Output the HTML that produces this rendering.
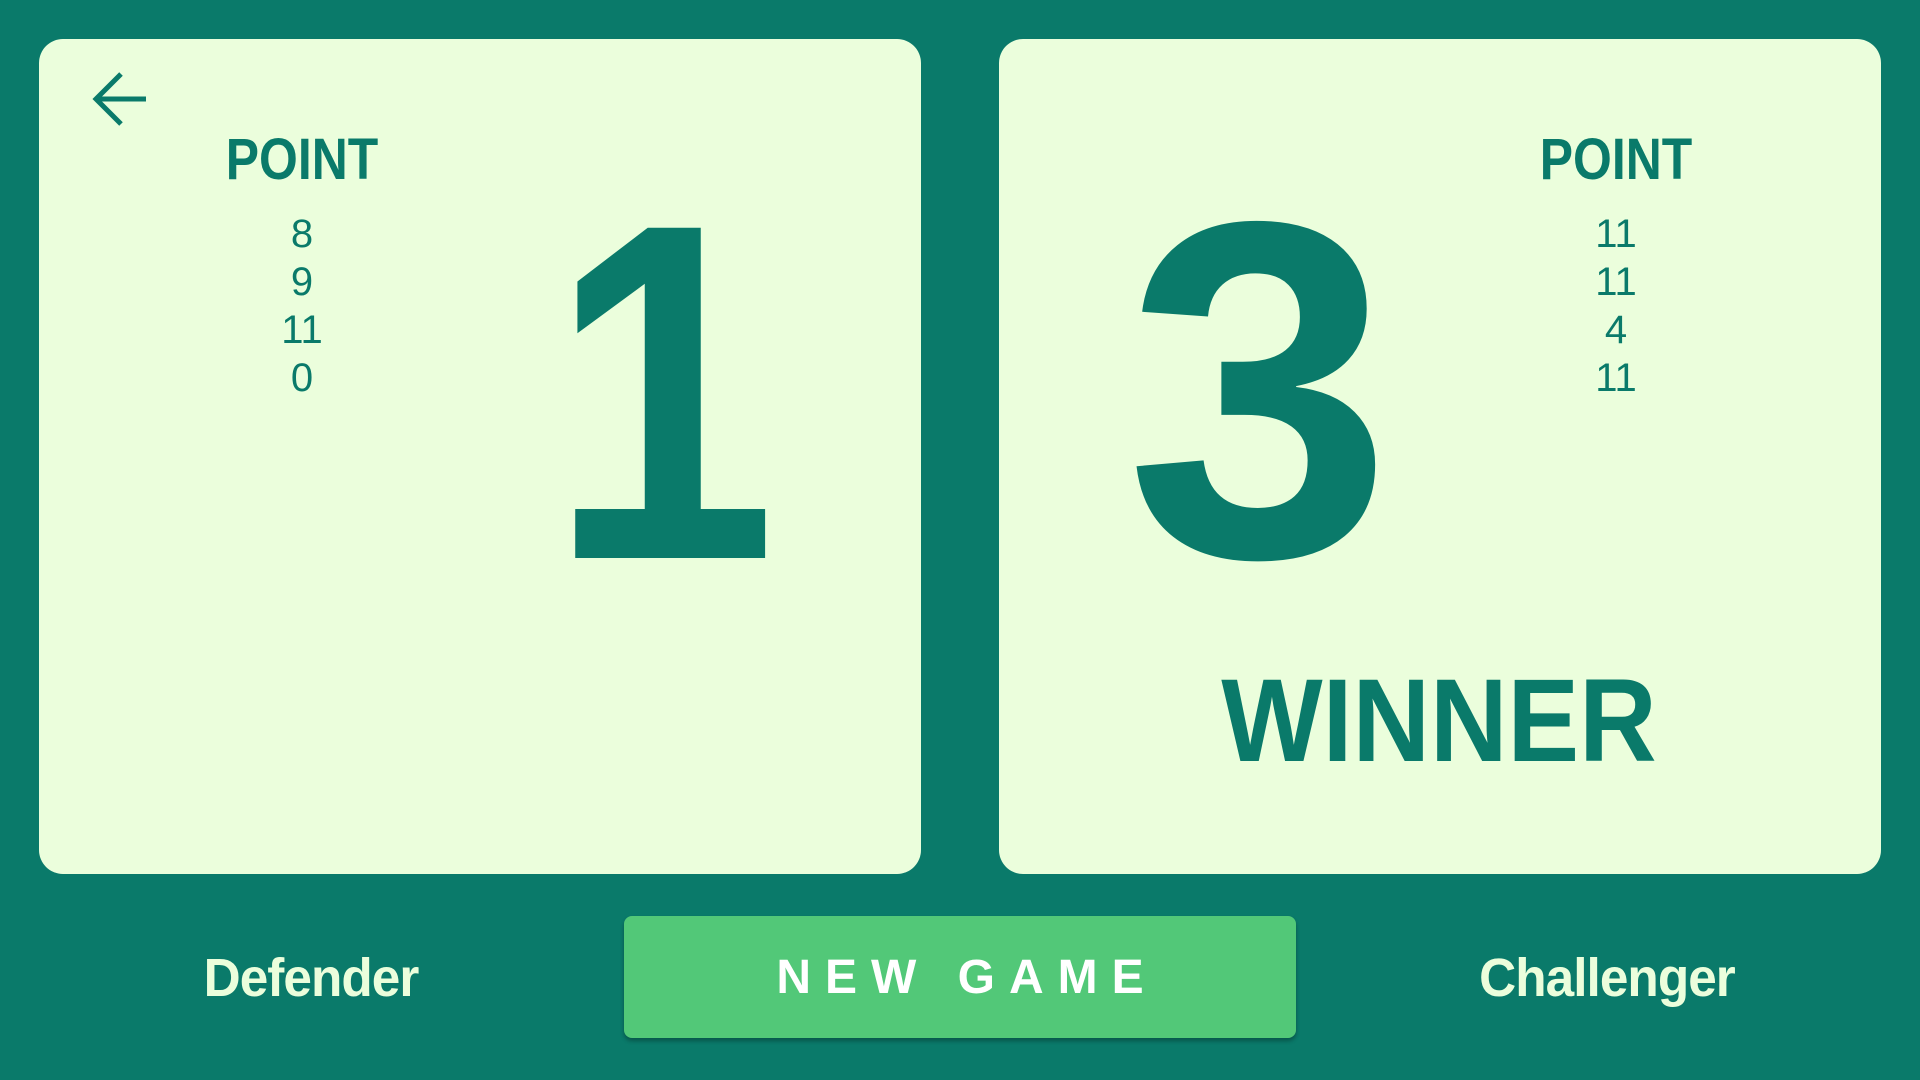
<!DOCTYPE html>
<html><head><style>
body{margin:0;width:1920px;height:1080px;background:#0a7a6a;font-family:"Liberation Sans",sans-serif;overflow:hidden;position:relative}
.card{position:absolute;top:39px;height:835px;width:882px;background:#ebfedc;border-radius:24px}
.t{position:absolute;color:#0a7a6a;font-weight:bold;text-align:center;white-space:nowrap}
.pts{position:absolute;color:#0a7a6a;text-align:center;font-size:40px;line-height:48px;width:200px}
</style></head><body>
<div class="card" style="left:39px"></div>
<div class="card" style="left:999px"></div>
<svg style="position:absolute;left:88px;top:70px" width="60" height="60" viewBox="0 0 60 60"><path d="M58 29H8M33 4L8 29l25 25" fill="none" stroke="#0a7a6a" stroke-width="5"/></svg>
<div class="t" style="left:202px;width:200px;top:130px;font-size:58px;line-height:60px;transform:scaleX(0.86)">POINT</div>
<div class="pts" style="left:202px;top:210px">8<br>9<br>11<br>0</div>
<div class="t" style="left:1516px;width:200px;top:130px;font-size:58px;line-height:60px;transform:scaleX(0.86)">POINT</div>
<div class="pts" style="left:1516px;top:210px">11<br>11<br>4<br>11</div>
<div class="t" style="left:463px;width:400px;top:152px;font-size:480px;line-height:480px;transform:scaleX(0.85)">1</div>
<div class="t" style="left:1059px;width:400px;top:150px;font-size:480px;line-height:480px">3</div>
<div class="t" style="left:1139px;width:600px;top:662px;font-size:118px;line-height:118px;transform:scaleX(0.91)">WINNER</div>
<div class="t" style="left:111px;width:400px;top:950px;font-size:54px;line-height:56px;color:#ebfedc;letter-spacing:-1px;transform:scaleX(0.95)">Defender</div>
<div class="t" style="left:1407px;width:400px;top:950px;font-size:54px;line-height:56px;color:#ebfedc;letter-spacing:-1px;transform:scaleX(0.95)">Challenger</div>
<div style="position:absolute;left:624px;top:916px;width:672px;height:122px;background:#52c878;border-radius:8px;box-shadow:0 3px 4px rgba(0,0,0,.3)"></div>
<div class="t" style="left:624px;width:672px;top:950px;font-size:48px;line-height:56px;color:#fff;letter-spacing:14px;padding-left:14px;box-sizing:border-box">NEW GAME</div>
</body></html>
